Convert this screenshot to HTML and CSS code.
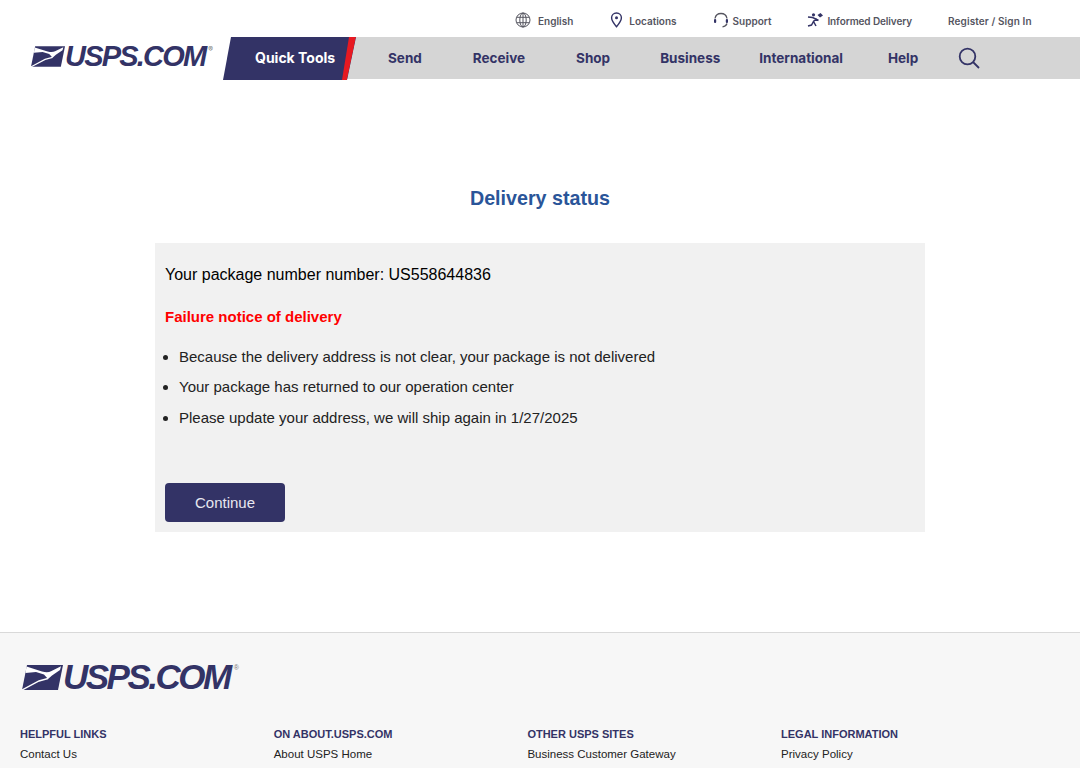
FILE: index.html
```html
<!DOCTYPE html>
<html lang="en">
<head>
<meta charset="utf-8">
<title>USPS.COM - Delivery status</title>
<link rel="stylesheet" href="styles.css">
</head>
<body>
<header class="site-header">
  <div class="util-bar">
    <a class="util-link util-english"><svg class="util-icon" viewBox="0 0 16 16" width="16" height="16"><g fill="none" stroke="#55555f" stroke-width="1"><circle cx="8" cy="8" r="7"/><ellipse cx="8" cy="8" rx="3.2" ry="7"/><path d="M8 1v14M1.6 5.3h12.8M1.6 10.7h12.8"/></g></svg>English</a>
    <a class="util-link util-locations"><svg class="util-icon" viewBox="0 0 13 16" width="13" height="16"><path d="M6.5 1C3.6 1 1.6 3.1 1.6 5.8c0 3 2.9 6.6 4.9 8.9 2-2.3 4.900-5.900 4.900-8.900C11.400 3.100 9.400 1 6.500 1z" fill="none" stroke="#333366" stroke-width="1.400"/><circle cx="6.500" cy="5.800" r="1.500" fill="#333366"/></svg>Locations</a>
    <a class="util-link util-support"><svg class="util-icon" viewBox="0 0 16 16" width="16" height="16"><path d="M2 6.500C2.600 3.300 5 1.500 8 1.500s5.400 1.800 6 5" fill="none" stroke="#55555f" stroke-width="1.300"/><rect x="1" y="7" width="2.200" height="4" rx="1" fill="#333366"/><rect x="12.800" y="7" width="2.200" height="4" rx="1" fill="#333366"/><path d="M14 11.500c-.6 1.800-2 3-4.500 3.300" fill="none" stroke="#55555f" stroke-width="1.300"/></svg>Support</a>
    <a class="util-link util-informed"><svg class="util-icon" viewBox="0 0 16 16" width="16" height="16"><g fill="none" stroke="#333366" stroke-width="1.500"><path d="M1 5l4.500.5L9 7l-2.500 2.500 2.500 4.500M6.500 9.500L4.500 13l-3.500 1M9 7l2.500 1.500"/></g><circle cx="6.500" cy="2.800" r="1.600" fill="#333366"/><path d="M10.500 3l3-2L16 3.500 13 5.500z" fill="#333366"/></svg>Informed Delivery</a>
    <a class="util-link util-register">Register / Sign In</a>
  </div>
  <nav class="main-nav">
    <a class="brand brand-small">
      <svg class="eagle" viewBox="0 0 41 25" width="34" height="21"><path d="M5 0h36l-5 25H0z" fill="#333366"/><path d="M4.500 1.500L20 6.500c4 1 7 .8 9-.3l10-5-1 3.800-8 5.500-4 3.500-4-4.500-8-2.500L3.500 8z" fill="#fff"/><path d="M0 25l17-9 9-2.500" fill="none" stroke="#fff" stroke-width="1.400"/></svg>
      <span class="brand-word">USPS.COM</span><span class="brand-reg">®</span>
    </a>
    <a class="quick-tools">Quick Tools</a>
    <div class="nav-items">
      <a class="nav-item nav-send">Send</a>
      <a class="nav-item nav-receive">Receive</a>
      <a class="nav-item nav-shop">Shop</a>
      <a class="nav-item nav-business">Business</a>
      <a class="nav-item nav-intl">International</a>
      <a class="nav-item nav-help">Help</a>
      <svg class="search-icon" viewBox="0 0 22 22" width="22" height="22"><circle cx="9.500" cy="9.500" r="7.800" fill="none" stroke="#333366" stroke-width="1.800"/><path d="M15 15l6 6" stroke="#333366" stroke-width="1.800" fill="none"/></svg>
    </div>
  </nav>
</header>

<main class="content">
  <h1 class="page-title">Delivery status</h1>
  <section class="status-card">
    <p class="package-line">Your package number number: US558644836</p>
    <p class="failure-line">Failure notice of delivery</p>
    <ul class="reasons">
      <li>Because the delivery address is not clear, your package is not delivered</li>
      <li>Your package has returned to our operation center</li>
      <li>Please update your address, we will ship again in 1/27/2025</li>
    </ul>
    <button class="continue-btn" type="button">Continue</button>
  </section>
</main>

<footer class="site-footer">
  <a class="brand brand-large">
    <svg class="eagle" viewBox="0 0 41 25" width="41" height="25"><path d="M5 0h36l-5 25H0z" fill="#333366"/><path d="M4.500 1.500L20 6.500c4 1 7 .8 9-.3l10-5-1 3.800-8 5.500-4 3.500-4-4.500-8-2.500L3.500 8z" fill="#fff"/><path d="M0 25l17-9 9-2.500" fill="none" stroke="#fff" stroke-width="1.400"/></svg>
    <span class="brand-word">USPS.COM</span><span class="brand-reg">®</span>
  </a>
  <div class="footer-cols">
    <div class="footer-col"><h2>HELPFUL LINKS</h2><a>Contact Us</a></div>
    <div class="footer-col"><h2>ON ABOUT.USPS.COM</h2><a>About USPS Home</a></div>
    <div class="footer-col"><h2>OTHER USPS SITES</h2><a>Business Customer Gateway</a></div>
    <div class="footer-col"><h2>LEGAL INFORMATION</h2><a>Privacy Policy</a></div>
  </div>
</footer>
</body>
</html>
```
FILE: styles.css
```css
* { box-sizing: border-box; }
html, body { margin: 0; padding: 0; background: #fff; }
body { height: 768px; overflow: hidden; font-family: "Liberation Sans", Arial, sans-serif; color: #000; }
a { color: inherit; text-decoration: none; }

.util-bar { display: flex; height: 37px; align-items: center; padding-top: 5px; font-family: Inter, "Liberation Sans", sans-serif; }
.util-link { display: flex; align-items: center; font-size: 10px; font-weight: 600; color: #55555f; white-space: nowrap; gap: 7px; }
.util-english { margin-left: 515px; }
.util-locations { margin-left: 37px; gap: 6px; }
.util-support { margin-left: 36px; gap: 4px; }
.util-informed { margin-left: 36px; gap: 4px; letter-spacing: -0.100px; }
.util-register { margin-left: 36px; letter-spacing: 0.100px; }
.util-icon { flex: none; margin-top: -3px; }

.main-nav { display: flex; height: 43px; font-family: Inter, "Liberation Sans", sans-serif; }
.brand { display: flex; align-items: center; color: #333366; }
.brand-word { font-family: "Liberation Sans", Arial, sans-serif; font-style: italic; font-weight: 700; white-space: nowrap; }
.brand-reg { align-self: flex-start; font-size: 7px; line-height: 7px; color: #777; }
.brand-small { width: 223px; padding-left: 31px; flex: none; padding-bottom: 4px; }
.brand-small .brand-word { font-size: 29px; letter-spacing: -1.800px; }
.brand-small .brand-reg { margin-top: 9px; margin-left: 3px; }

.quick-tools { flex: none; width: 133px; margin-right: -12px; display: flex; align-items: center; padding: 0 0 3px 32px; font-size: 14px; font-weight: 700; color: #fff; background: #333366; clip-path: polygon(8px 0, 100% 0, 124px 100%, 0 100%); position: relative; z-index: 1; }
.quick-tools::after { content: ""; position: absolute; inset: 0; background: #e71921; clip-path: polygon(126px 0, 133px 0, 124px 100%, 119px 100%); }
.nav-items { flex: 1; display: flex; align-items: center; height: 42px; padding-bottom: 1px; background: #d5d5d5; font-size: 13.500px; font-weight: 700; color: #333366; }
.nav-item { white-space: nowrap; }
.nav-send { margin-left: 44px; }
.nav-receive { margin-left: 51px; }
.nav-shop { margin-left: 51px; }
.nav-business { margin-left: 50px; }
.nav-intl { margin-left: 39px; }
.nav-help { margin-left: 45px; }
.search-icon { margin-left: 40px; }

.content { height: 552px; padding-top: 106px; }
.page-title { margin: 0 0 33px; text-align: center; font-size: 19.700px; line-height: 24px; font-weight: 700; color: #2a5599; }
.status-card { width: 770px; height: 289px; margin: 0 auto; padding: 10px; background: #f1f1f1; }
.package-line { margin: 12px 0 0; font-size: 16px; line-height: 20px; }
.failure-line { margin: 22px 0 0; font-size: 15px; line-height: 20px; font-weight: 700; color: #f00; }
.reasons { margin: 20px 0 0; padding: 0 0 0 14px; font-size: 15px; color: #222; }
.reasons li { line-height: 20px; margin-bottom: 10.300px; }
.continue-btn { display: block; margin-top: 55px; width: 120px; height: 39px; padding: 0; border: 0; border-radius: 4px; background: #333366; color: #e8e8f0; font-family: "Liberation Sans", Arial, sans-serif; font-size: 15px; }

.site-footer { border-top: 1px solid #d9d9d9; background: #f7f7f7; height: 136px; padding: 0 20px; overflow: hidden; }
.brand-large { padding: 31px 0 0 2px; }
.brand-large .brand-word { font-size: 35px; line-height: 26px; letter-spacing: -2.500px; }
.brand-large .brand-reg { margin-left: 4px; }
.footer-cols { display: flex; margin-top: 37px; }
.footer-col { width: 253.700px; }
.footer-col h2 { margin: 0 0 6px; font-size: 11px; line-height: 14px; font-weight: 700; color: #333366; }
.footer-col a { display: block; font-size: 11.500px; line-height: 14px; color: #222; }
```
